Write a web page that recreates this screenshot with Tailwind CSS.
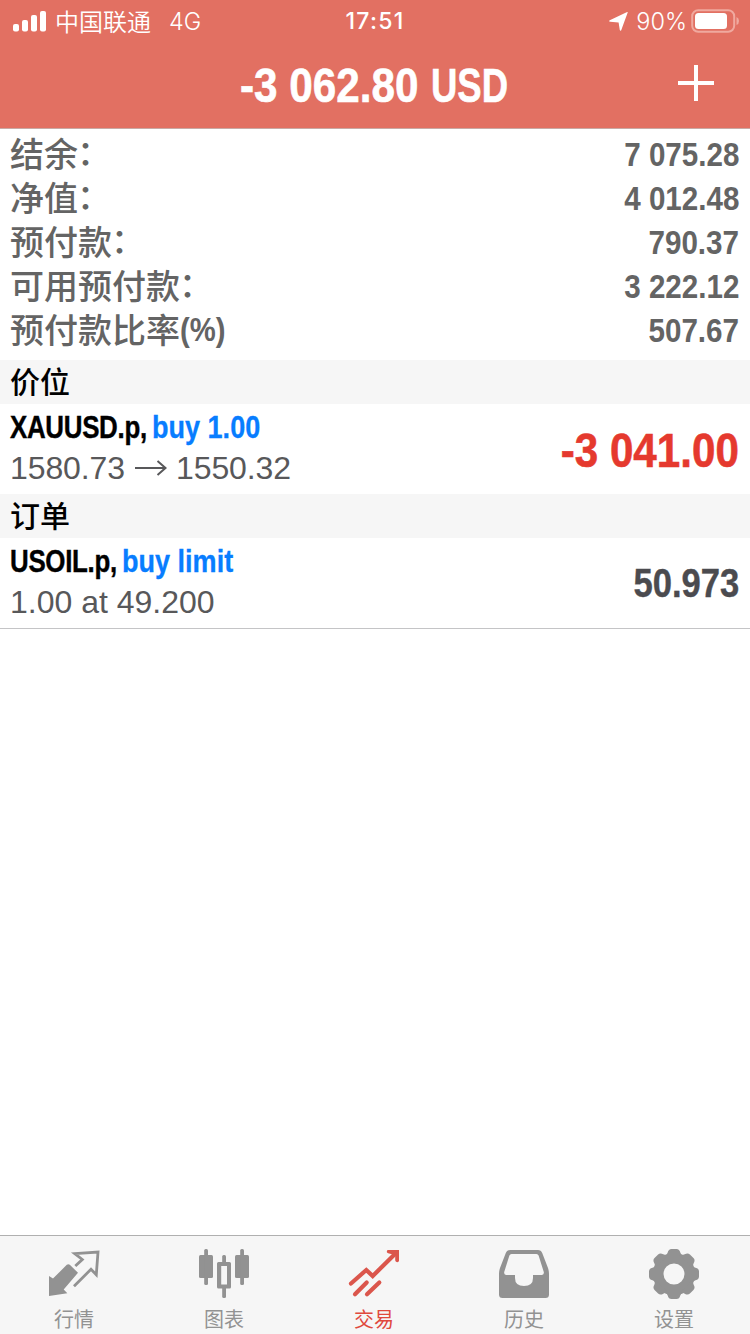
<!DOCTYPE html>
<html lang="zh-CN">
<head>
<meta charset="utf-8">
<title>交易</title>
<script src="https://cdn.jsdelivr.net/npm/@tailwindcss/browser@4"></script>
</head>
<body class="bg-white">
<div class="w-[750px] h-[1334px] flex flex-col overflow-hidden bg-white font-['Liberation_Sans','Noto_Sans_CJK_SC',sans-serif]">
  <header class="h-[129px] shrink-0 bg-[#e27062] border-b border-[#c9a9a4] text-white flex flex-col">
    <div class="h-10 grid grid-cols-3 items-center font-['Inter','Noto_Sans_CJK_SC',sans-serif]">
      <div class="flex h-10 items-center pl-[13px]">
        <svg class="w-[33px] h-[22px]" viewBox="0 0 33 22" fill="#fff"><rect x="0" y="14" width="6" height="7.5" rx="2"/><rect x="9" y="10" width="6" height="11.5" rx="2"/><rect x="18" y="5" width="6" height="16.5" rx="2"/><rect x="27" y="1" width="6" height="20.5" rx="2"/></svg>
        <span class="ml-[9px] text-[24px] leading-10 font-[350] font-['Noto_Sans_CJK_SC',sans-serif]">中国联通</span>
        <span class="ml-[18px] pt-[2px] text-[23.5px] leading-10 font-light">4G</span>
      </div>
      <div class="text-center pt-[1px] text-[23px] leading-10 font-medium tracking-[1.3px]">17:51</div>
      <div class="flex h-10 items-center justify-end pr-[11px]">
        <svg class="w-[20px] h-[20px]" viewBox="0 0 20 20" fill="#fff"><path d="M18.700 1.600 12.200 19.200Q11.500 20.400 10.800 19L9.600 11.600 1.200 10.800Q-.8 10.200 .8 9.200L17.600 1.200Q19 .6 18.700 1.600Z"/></svg>
        <span class="ml-[7px] pt-[2px] text-[23.5px] leading-10 font-light">90%</span>
        <svg class="ml-[4px] w-[48px] h-[24px]" viewBox="0 0 48 24"><rect x="1.2" y="1.2" width="42" height="21.6" rx="6" fill="none" stroke="#f0a99f" stroke-width="2"/><rect x="4" y="4" width="32" height="16" rx="3.5" fill="#fff"/><path d="M45.5 8Q48 9 48 12T45.5 16Z" fill="#f0a99f"/></svg>
      </div>
    </div>
    <div class="flex-1 grid grid-cols-[1fr_auto_1fr] items-center">
      <span></span>
      <h1 class="flex pt-[4px] pr-[2px] text-[48px] leading-[84px] font-bold whitespace-nowrap [-webkit-text-stroke:0.6px_#fff]"><span class="w-[191px] origin-left scale-x-[0.88]">-3 062.80</span><span class="w-[77px] origin-left scale-x-[0.76]">USD</span></h1>
      <svg class="justify-self-end mr-[36px] mb-[3px] w-[36px] h-[36px]" viewBox="0 0 36 36" fill="#fff"><path d="M16 0h4v16h16v4H20v16h-4V20H0v-4h16z"/></svg>
    </div>
  </header>

  <main class="flex-1">
    <section class="pt-[3px] pb-2 pl-[10px] pr-[11px] text-[34px] text-[#646464]">
      <div class="h-11 flex justify-between items-center"><span class="pb-[2px] font-medium leading-[42px] font-['Noto_Sans_CJK_SC',sans-serif]">结余<span class="relative -left-px -top-[2px]">：</span></span><span class="font-bold origin-right scale-x-[0.87]">7 075.28</span></div>
      <div class="h-11 flex justify-between items-center"><span class="pb-[2px] font-medium leading-[42px] font-['Noto_Sans_CJK_SC',sans-serif]">净值<span class="relative -left-px -top-[2px]">：</span></span><span class="font-bold origin-right scale-x-[0.87]">4 012.48</span></div>
      <div class="h-11 flex justify-between items-center"><span class="pb-[2px] font-medium leading-[42px] font-['Noto_Sans_CJK_SC',sans-serif]">预付款<span class="relative -left-px -top-[2px]">：</span></span><span class="font-bold origin-right scale-x-[0.87]">790.37</span></div>
      <div class="h-11 flex justify-between items-center"><span class="pb-[2px] font-medium leading-[42px] font-['Noto_Sans_CJK_SC',sans-serif]">可用预付款<span class="relative -left-px -top-[2px]">：</span></span><span class="font-bold origin-right scale-x-[0.87]">3 222.12</span></div>
      <div class="h-11 flex justify-between items-center"><span class="pb-[2px] flex items-center font-medium leading-[42px] font-['Noto_Sans_CJK_SC',sans-serif]">预付款比率<span class="origin-left scale-x-[0.86] font-bold font-['Liberation_Sans']">(%)</span></span><span class="font-bold origin-right scale-x-[0.87]">507.67</span></div>
    </section>

    <h2 class="h-11 px-[10px] bg-[#f6f6f6] text-black text-[30px] leading-[41px] font-medium font-['Noto_Sans_CJK_SC',sans-serif]">价位</h2>
    <section class="h-[90px] pl-[10px] pr-[11px] flex justify-between items-center">
      <div class="flex flex-col pb-[4px]">
        <div class="h-[42px] flex text-[32px] leading-[42px] font-bold whitespace-nowrap text-black"><span class="w-[142px] origin-left scale-x-[0.81] tracking-[-0.4px] [-webkit-text-stroke:0.4px_#000]">XAUUSD.p,</span><span class="text-[#087dff] origin-left scale-x-[0.845] [-webkit-text-stroke:0.3px_#087dff]">buy 1.00</span></div>
        <div class="h-[40px] text-[32px] leading-[40px] text-[#58585a] tracking-[-0.1px] flex items-center"><span>1580.73</span><svg class="ml-[10px] mr-[9px] w-[32px] h-[20px]" viewBox="0 0 32 20" fill="none" stroke="#58585a" stroke-width="2"><path d="M0 10H30M22.5 3 30.5 10 22.5 17"/></svg><span>1550.32</span></div>
      </div>
      <span class="pt-[4px] text-[48px] font-bold text-[#e5392e] origin-right scale-x-[0.878] [-webkit-text-stroke:0.6px_#e5392e]">-3 041.00</span>
    </section>

    <h2 class="h-11 px-[10px] bg-[#f6f6f6] text-black text-[30px] leading-[41px] font-medium font-['Noto_Sans_CJK_SC',sans-serif]">订单</h2>
    <section class="h-[91px] pl-[10px] pr-[11px] flex justify-between items-center border-b border-[#c4c4c6]">
      <div class="flex flex-col pb-[4px]">
        <div class="h-[42px] flex text-[32px] leading-[42px] font-bold whitespace-nowrap text-black"><span class="w-[112px] origin-left scale-x-[0.81] tracking-[-0.4px] [-webkit-text-stroke:0.4px_#000]">USOIL.p,</span><span class="text-[#087dff] origin-left scale-x-[0.845] [-webkit-text-stroke:0.3px_#087dff]">buy limit</span></div>
        <div class="h-[40px] text-[32px] leading-[40px] text-[#58585a]">1.00 at 49.200</div>
      </div>
      <span class="text-[40px] font-bold text-[#4b4b4f] origin-right scale-x-[0.865] [-webkit-text-stroke:0.4px_#4b4b4f]">50.973</span>
    </section>
  </main>

  <nav class="h-[99px] shrink-0 border-t border-[#b0b0b0] bg-[#f6f6f6] grid grid-cols-5 text-[20px] text-[#929292] font-['Noto_Sans_CJK_SC',sans-serif]">
    <a class="flex flex-col items-center pt-[12px] pr-[2px]">
      <svg class="w-[52px] h-[52px]" viewBox="0 0 52 52"><path d="M1 28 5 30.600 18.800 16.800Q20.300 15.500 21.800 16.800L30 24.800 15.700 41.500 19.300 45.200 1 48Z" fill="#929292"/><path d="M27.300 18 34.300 11.500 26.700 5.700 50 4 48.300 26.700 43 21.300 26 38.300" fill="none" stroke="#929292" stroke-width="2.8"/></svg>
      <span class="leading-[28px] mt-[5px]">行情</span>
    </a>
    <a class="flex flex-col items-center pt-[12px] pr-[2px]">
      <svg class="w-[52px] h-[52px]" viewBox="0 0 52 52" fill="#929292"><rect x="1" y="7" width="14" height="23" rx="1.5"/><rect x="6.2" y="1" width="3.8" height="36" rx="1.5"/><rect x="37" y="7" width="14" height="23" rx="1.5"/><rect x="42.2" y="1" width="3.8" height="36" rx="1.5"/><rect x="24.2" y="7" width="3.8" height="8" rx="1.5"/><rect x="24.2" y="38" width="3.8" height="12" rx="1.5"/><path fill-rule="evenodd" d="M20.5 14h11q1.500 0 1.500 1.500v23.500q0 1.500-1.500 1.500h-11q-1.500 0-1.500-1.500V15.500q0-1.500 1.500-1.500ZM23.200 18v18.500h5.800V18Z"/></svg>
      <span class="leading-[28px] mt-[5px]">图表</span>
    </a>
    <a class="flex flex-col items-center pt-[12px] pr-[2px] text-[#e0493d]">
      <svg class="w-[52px] h-[52px]" viewBox="0 0 52 52" fill="none" stroke="#db564c" stroke-width="4.2" stroke-linecap="round"><path d="M3 35.500 18.300 22 24.700 28 47 6"/><path d="M7 46.300 18.700 34.500M19 46.300 31.300 34.500"/><path d="M39.500 2H51V13Q50.500 14.500 48.500 14 47.200 13.500 47.200 12V7L41 5.500Q37.500 4.500 39.500 2Z" fill="#db564c" stroke="none"/></svg>
      <span class="leading-[28px] mt-[5px]">交易</span>
    </a>
    <a class="flex flex-col items-center pt-[12px] pr-[2px]">
      <svg class="w-[52px] h-[52px]" viewBox="0 0 52 52" fill="#929292"><path fill-rule="evenodd" d="M12 2H40Q43 2 44.200 5L50 20Q51 23 51 26V46.500Q51 50 47.500 50H4.500Q1 50 1 46.500V26Q1 23 2 20L7.800 5Q9 2 12 2ZM13.500 6Q12 6 11.400 7.500L6.200 24Q5.800 27 8 27H17V30Q17 38 26 38T35 30V27H44Q46.200 27 45.800 24L40.600 7.500Q40 6 38.500 6Z"/></svg>
      <span class="leading-[28px] mt-[5px]">历史</span>
    </a>
    <a class="flex flex-col items-center pt-[12px] pr-[2px]">
      <svg class="w-[52px] h-[52px]" viewBox="-26 -26 52 52" fill="#929292"><circle r="15.800" fill="none" stroke="#929292" stroke-width="10.600"/><g id="teeth"><path id="tooth" d="M-9.500-17.500Q-7-19-6.300-21.500-5.500-25-2.500-25H2.500Q5.500-25 6.300-21.500 7-19 9.500-17.500Z"/><use href="#tooth" transform="rotate(45)"/><use href="#tooth" transform="rotate(90)"/><use href="#tooth" transform="rotate(135)"/></g><use href="#teeth" transform="rotate(180)"/></svg>
      <span class="leading-[28px] mt-[5px]">设置</span>
    </a>
  </nav>
</div>
</body>
</html>
